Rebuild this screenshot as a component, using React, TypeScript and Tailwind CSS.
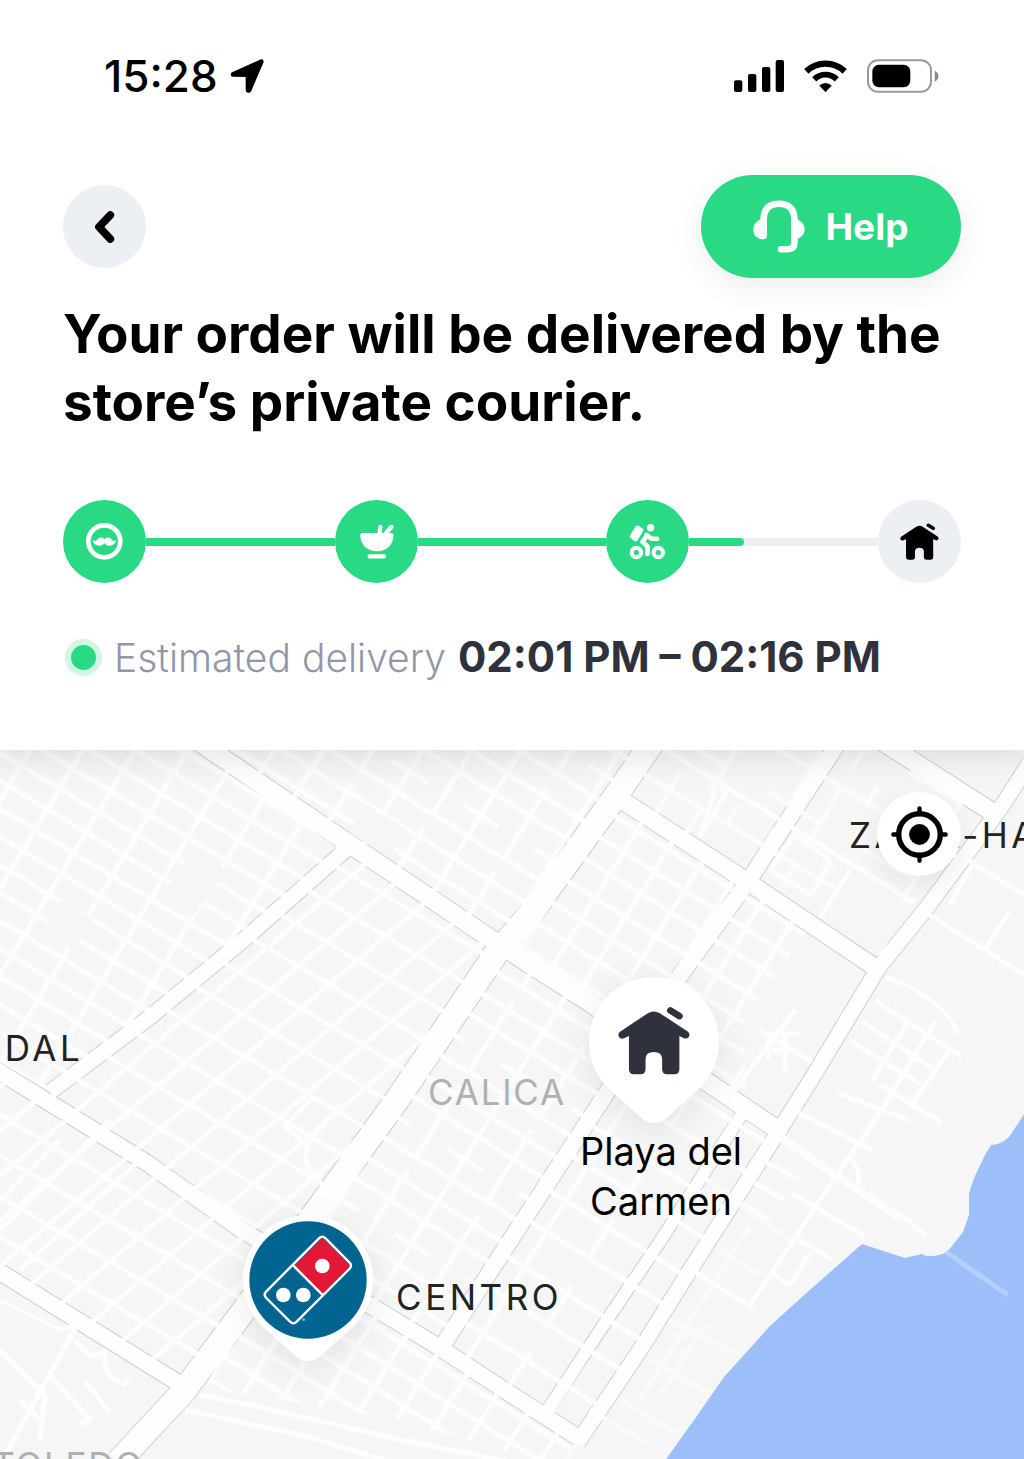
import type { ReactNode } from 'react'

const MAP_WIDTH = 1024
const MAP_TOP = 750
const MAP_HEIGHT = 709

type Road = { d: string; width: number }

const mainRoads: Road[] = [
  { d: 'M196 740 L348 843 L497 943 L595 1006 L775 1128', width: 18 },
  { d: 'M350 846 L247 937 L150 1017 L50 1092', width: 15 },
  { d: 'M654 740 L615 797 L528 917 L497 952 L397 1100 L315 1213 L242 1313 L183 1392 L118 1462', width: 24 },
  { d: 'M-5 1069 L45 1100 L147 1163 L243 1231 L373 1307 L437 1346 L512 1395 L579 1438', width: 16 },
  { d: 'M-5 1269 L180 1384', width: 16 },
  { d: 'M840 740 L749 880 L682 973 L602 1100 L515 1233 L443 1345', width: 16 },
  { d: 'M1030 762 L1002 806 L925 910 L879 967 L809 1083 L775 1137 L692 1267 L642 1347 L578 1442', width: 15 },
  { d: 'M742 1114 L659 1243 L609 1317 L546 1412', width: 12 },
  { d: 'M620 799 L745 880 L879 970', width: 17 },
  { d: 'M880 740 L992 812', width: 18 },
]

// Street blocks between the main roads, each filled with its own street pattern
const districts = [
  { points: '0,740 200,740 348,848 50,1092 0,1062', fill: 'url(#streets-a)' },
  { points: '205,740 654,740 522,935 497,943', fill: 'url(#streets-b)' },
  { points: '348,848 497,947 315,1213 243,1232 50,1095', fill: 'url(#streets-c)' },
  { points: '619,797 749,883 682,973 654,1045 595,1007 505,945', fill: 'url(#streets-d)' },
  { points: '654,740 840,740 749,883 622,800', fill: 'url(#streets-e)' },
  { points: '840,740 890,740 995,815 975,850 930,905 749,883', fill: 'url(#streets-e)' },
  { points: '749,883 812,925 745,1020 745,1107 650,1040 682,973', fill: 'url(#streets-d)' },
  { points: '505,947 600,1010 602,1100 443,1343 330,1290 315,1213', fill: 'url(#streets-b)' },
  { points: '0,1072 243,1232 242,1313 180,1387 0,1272', fill: 'url(#streets-c)' },
  { points: '245,1310 373,1307 579,1440 565,1470 400,1420 205,1388', fill: 'url(#streets-d)' },
  { points: '602,1100 650,1040 742,1114 546,1412 443,1345', fill: 'url(#streets-f)' },
  { points: '742,1114 775,1137 578,1442 546,1412', fill: 'url(#streets-f)' },
]

const sideStreets = [
  'M782 1136 L832 1173 M882 1110 L835 1177 L772 1273 L747 1308',
  'M799 1113 L872 1150 M838 1093 L910 1121 M880 1085 L942 1123 M882 1110 L912 1060 L936 1020',
  'M762 1160 L799 1180 M755 1183 L784 1200 M742 1203 L769 1220 M792 1193 L865 1237',
  'M692 1270 L755 1310 M795 1237 L832 1260 M810 1253 L790 1285 L772 1273',
  'M852 1160 Q862 1172 858 1184 M897 1212 L926 1235',
  'M875 1000 L962 1057 M862 1022 L932 1068 M849 1040 L920 1084 M908 1022 L872 1080 M949 1050 L912 1104',
  'M886 977 Q945 998 958 1035',
  'M925 912 L985 950 L1024 975 M985 950 L1010 910 M950 905 L975 860 M968 860 L1024 895',
  'M768 1034 H800 M772 1050 H798 M785 1036 V1070 M768 1040 V1060 M760 1030 L812 1062 M795 1010 L735 1090',
  'M650 740 L780 820 L915 903 M715 790 L700 835 L725 795 Q726 787 720 792',
  'M770 870 L795 835 L830 860 L812 895 L770 870 M850 870 L820 918',
  'M310 1100 L285 1127 L308 1145 Q300 1170 322 1178 M308 1145 L330 1115 L340 1105',
  'M0 1200 L60 1140 M0 1230 L110 1120 M20 1270 L140 1160',
  'M200 1395 L260 1407 L400 1440 L512 1462 M185 1410 L300 1435 L420 1470',
  'M0 1300 L60 1330 L75 1325 M80 1320 L5 1455 M50 1375 L90 1420 L80 1425 M20 1400 L45 1425 M85 1382 L110 1412',
  'M75 1340 Q90 1362 105 1352 Q100 1375 125 1385 L128 1378 M0 1350 L45 1395 L40 1440',
]

const faintStreets = [
  'M768 1150 L560 1470 M720 1250 L760 1275 M670 1320 L740 1355 M650 1360 L708 1392 M620 1400 L675 1432',
  'M750 1225 L640 1400 M705 1325 L660 1395 M700 1175 L790 1240 M590 1410 L650 1445',
]

const mapLabels = [
  { text: 'DAL', x: 44, y: 1048, className: 'text-[#222] tracking-widest' },
  { text: 'ZAZIL-HA', x: 944, y: 835, className: 'text-[#222] tracking-widest' },
  { text: 'CALICA', x: 497, y: 1092, className: 'text-[#b0b0b0] tracking-wider' },
  { text: 'CENTRO', x: 479, y: 1297, className: 'text-[#222] tracking-widest' },
  { text: 'TOLEDO', x: 68, y: 1465, className: 'text-[#b0b0b0] tracking-wider' },
]

// Position on the map canvas as a share of its size
const place = (x: number, y: number) => ({
  left: `${(x / MAP_WIDTH) * 100}%`,
  top: `${((y - MAP_TOP) / MAP_HEIGHT) * 100}%`,
})

const HouseIcon = ({ className }: { className: string }) => (
  <svg viewBox="0 0 217 207" className={className} fill="currentColor" aria-hidden="true">
    <path d="M90 21 Q108 11 126 21 L210 76 Q219 84 213 93 Q207 101 196 95 L185 90 V190 Q185 205 170 205 H148 Q133 205 133 190 V160 Q133 138 108 138 Q83 138 83 160 V190 Q83 205 68 205 H48 Q33 205 33 190 V90 L20 96 Q9 101 3 93 Q-2 84 6 77 Z" />
    <path d="M158 13 L185 30" stroke="currentColor" strokeWidth="20" strokeLinecap="round" />
  </svg>
)

const MustacheIcon = () => (
  <svg viewBox="0 0 111 111" className="size-[37px]" aria-hidden="true">
    <circle cx="55" cy="55" r="48" fill="none" stroke="currentColor" strokeWidth="14" />
    <path
      fill="currentColor"
      d="M55 49 C50 42 38 42 33 50 C29 55 24 55 20 51 C21 63 32 69 43 68 C50 67 54 63 55 60 C56 63 60 67 67 68 C78 69 89 63 91 51 C86 55 82 55 78 50 C72 42 60 42 55 49 Z"
    />
  </svg>
)

const BowlIcon = () => (
  <svg viewBox="0 0 105 105" className="size-[35px]" aria-hidden="true">
    <path d="M9 27 H97 Q103 27 103 34 C103 64 82 82 54 82 C26 82 4 64 4 34 Q4 27 9 27 Z" fill="currentColor" />
    <path d="M61 30 L64 9 M77 32 L97 9 M32 97 H75" fill="none" stroke="currentColor" strokeWidth="13" strokeLinecap="round" />
  </svg>
)

const CourierIcon = () => (
  <svg viewBox="0 0 110 110" className="size-[37px]" fill="none" stroke="currentColor" strokeLinecap="round" strokeLinejoin="round" aria-hidden="true">
    <circle cx="22" cy="88" r="14" strokeWidth="12" />
    <circle cx="87" cy="88" r="14" strokeWidth="12" />
    <circle cx="64" cy="14" r="11" fill="currentColor" stroke="none" />
    <path d="M25 14 L36 21 L20 48 L9 40 Z" fill="currentColor" strokeWidth="13" />
    <path d="M54 37 L40 56 L55 70 V92" strokeWidth="14" />
    <path d="M51 35 L67 47 H84" strokeWidth="13" />
  </svg>
)

const HeadsetIcon = () => (
  <svg viewBox="0 0 158 160" className="h-[53px] w-[52px]" aria-hidden="true">
    <path
      d="M32 105 V58 Q34 11 79 11 Q124 11 126 58 V128 Q126 149 105 149 H85"
      fill="none"
      stroke="currentColor"
      strokeWidth="20"
      strokeLinecap="round"
    />
    <path
      d="M32 56 C12 60 1 74 1 88 C1 107 13 119 33 119 Q42 119 42 110 V56 Z M125 56 C146 60 157 74 157 88 C157 103 147 114 130 118 L116 119 V56 Z"
      fill="currentColor"
    />
  </svg>
)

const StatusBar = () => (
  <div className="flex h-16 items-center justify-between pr-[22px] pl-[41px]">
    <div className="flex items-center gap-3">
      <span className="text-[44px] leading-none font-medium text-black">15:28</span>
      <svg viewBox="0 0 102 102" className="size-[34px]" aria-hidden="true">
        <path d="M9 46 L94 8 L57 94 H54 V47 Z" stroke="black" strokeWidth="14" strokeLinejoin="round" />
      </svg>
    </div>
    <div className="flex items-center gap-5">
      <svg viewBox="0 0 150 96" className="h-8 w-[50px]" aria-hidden="true">
        <rect x="0" y="61" width="25" height="35" rx="6" />
        <rect x="42" y="42" width="25" height="54" rx="6" />
        <rect x="84" y="21" width="25" height="75" rx="6" />
        <rect x="125" y="0" width="25" height="96" rx="6" />
      </svg>
      <svg viewBox="0 0 130 96" className="h-8 w-[43px]" aria-hidden="true">
        <path d="M7 34 A84 84 0 0 1 123 34" fill="none" stroke="black" strokeWidth="19" />
        <path d="M31 58 A48 48 0 0 1 99 58" fill="none" stroke="black" strokeWidth="18" />
        <path d="M46 77 Q65 61 84 77 L65 97 Z" />
      </svg>
      <svg viewBox="0 0 216 101" className="h-[34px] w-[72px]" aria-hidden="true">
        <rect x="3" y="3" width="189" height="95" rx="30" fill="none" stroke="#999" strokeWidth="6" />
        <rect x="16" y="17" width="114" height="67" rx="20" />
        <path d="M203 35 Q214 40 214 51 Q214 62 203 67 Z" fill="#888" />
      </svg>
    </div>
  </div>
)

type StepProps = { label: string; done?: boolean; children: ReactNode }

const Step = ({ label, done, children }: StepProps) => (
  <div
    role="img"
    aria-label={label}
    className={`flex size-[83px] shrink-0 items-center justify-center rounded-full ${
      done ? 'bg-[#2ad984] text-white' : 'bg-[#eceff4] text-black'
    }`}
  >
    {children}
  </div>
)

const Connector = ({ percent }: { percent: number }) => (
  <div className="h-2 flex-1 bg-[#eceff4]">
    <div
      className={`h-full bg-[#2ad984] ${percent < 100 ? 'rounded-r-full' : ''}`}
      style={{ width: `${percent}%` }}
    />
  </div>
)

const CityMap = () => (
  <svg viewBox={`0 ${MAP_TOP} ${MAP_WIDTH} ${MAP_HEIGHT}`} className="block h-auto w-full bg-[#f6f6f6]" aria-hidden="true">
    <defs>
      <pattern id="streets-a" width="90" height="96" patternUnits="userSpaceOnUse" patternTransform="translate(7 750) rotate(31)">
        <path d="M0 6 H90 M0 30 H90 M0 54 H90 M0 78 H90 M20 0 V96 M65 0 V96" fill="none" stroke="#fdfdfd" strokeWidth="5" />
      </pattern>
      <pattern id="streets-b" width="84" height="100" patternUnits="userSpaceOnUse" patternTransform="translate(300 750) rotate(32)">
        <path d="M0 10 H84 M0 34 H84 M0 60 H42 M0 84 H84 M20 0 V100 M62 0 V84" fill="none" stroke="#fdfdfd" strokeWidth="5" />
      </pattern>
      <pattern id="streets-c" width="72" height="74" patternUnits="userSpaceOnUse" patternTransform="matrix(0.86 0.51 -0.76 0.65 348 860)">
        <path d="M0 12 H72 M0 49 H72 M15 0 V74 M51 0 V74" fill="none" stroke="#fdfdfd" strokeWidth="5" />
      </pattern>
      <pattern id="streets-d" width="72" height="80" patternUnits="userSpaceOnUse" patternTransform="translate(628 815) rotate(32)">
        <path d="M0 8 H72 M0 34 H72 M0 60 H72 M16 0 V80 M52 0 V80" fill="none" stroke="#fdfdfd" strokeWidth="5" />
      </pattern>
      <pattern id="streets-e" width="110" height="90" patternUnits="userSpaceOnUse" patternTransform="translate(660 760) rotate(31)">
        <path d="M0 20 H110 M0 62 H60 M24 0 V62 M60 20 V90 M90 0 V20" fill="none" stroke="#fcfcfc" strokeWidth="5" />
      </pattern>
      <pattern id="streets-f" width="100" height="78" patternUnits="userSpaceOnUse" patternTransform="translate(602 1120) rotate(32)">
        <path d="M0 10 H100 M0 46 H100 M12 0 V78 M62 0 V46" fill="none" stroke="#fdfdfd" strokeWidth="5" />
      </pattern>
    </defs>

    {/* Sea */}
    <path
      d="M1030 1100 L1023 1116 L1009 1137 Q1000 1145 991 1145 L985 1155 L974 1178 L969 1193 V1215 L963 1232 L948 1251 Q940 1257 926 1256 L922 1254 L905 1258 L862 1244 L803 1296 L770 1326 L724 1377 L694 1420 L664 1462 H1030 Z"
      fill="#9dbff9"
    />
    <path d="M946 1252 L1008 1295" stroke="#b5cffb" strokeWidth="5" />

    {/* Casings go under the small streets so that every junction stays open */}
    <g fill="none" strokeLinejoin="round">
      {mainRoads.map((road) => (
        <path key={road.d} d={road.d} stroke="#cfcfcf" strokeWidth={road.width + 2} />
      ))}
    </g>
    {districts.map((district) => (
      <polygon key={district.points} points={district.points} fill={district.fill} />
    ))}

    {/* Parks and plots without streets */}
    <g fill="#f6f6f6">
      <path d="M63 901 L93 920 L73 950 L43 931 Z" />
      <path d="M193 850 L226 870 L193 916 L164 897 Z" />
      <path d="M364 804 L408 830 L388 856 L350 833 Z" />
      <path d="M852 873 L908 906 L880 957 L824 920 Z" />
    </g>

    <g fill="none" stroke="#fdfdfd" strokeWidth="5" strokeLinejoin="round">
      {sideStreets.map((d) => (
        <path key={d} d={d} />
      ))}
    </g>
    <path d="M782 1138 L832 1173 L899 1217" fill="none" stroke="#fdfdfd" strokeWidth="8" />
    <g fill="none" stroke="#fafafa" strokeWidth="5">
      {faintStreets.map((d) => (
        <path key={d} d={d} />
      ))}
    </g>
    <g fill="none" stroke="#fefefe" strokeLinejoin="round">
      {mainRoads.map((road) => (
        <path key={road.d} d={road.d} strokeWidth={road.width} />
      ))}
    </g>
  </svg>
)

const pinShape =
  'M195 0 A195 195 0 0 1 334 332 L230 425 Q195 450 160 425 L56 332 A195 195 0 0 1 195 0 Z'

const StorePin = () => (
  <svg viewBox="0 0 390 438" className="h-[146px] w-[130px] overflow-visible drop-shadow-[0_8px_16px_rgba(0,0,0,0.08)]" role="img" aria-label="Store">
    <path d={pinShape} fill="#fff" />
    <circle cx="195" cy="195" r="176" fill="#006491" />
    <path d="M238 68 L321 152 L239 240 L153 154 Z" fill="#e31837" />
    <path
      d="M228 70 Q238 60 248 70 L319 142 Q329 152 319 162 L161 320 Q151 330 141 320 L70 249 Q60 239 70 229 Z M151 152 L240 241"
      fill="none"
      stroke="#fff"
      strokeWidth="7"
    />
    <circle cx="238" cy="153" r="22" fill="#fff" />
    <circle cx="121" cy="240" r="22" fill="#fff" />
    <circle cx="181" cy="240" r="22" fill="#fff" />
    <circle cx="182" cy="314" r="4" fill="#8fb8cf" />
  </svg>
)

const HomePin = () => (
  <div className="relative text-[#2f323d]">
    <svg viewBox="0 0 390 438" className="h-[146px] w-[130px] overflow-visible drop-shadow-[0_8px_16px_rgba(0,0,0,0.08)]" aria-hidden="true">
      <path d={pinShape} fill="#fff" />
    </svg>
    <div className="absolute inset-x-0 top-0 flex h-[126px] items-center justify-center">
      <HouseIcon className="h-[69px] w-[72px]" />
    </div>
  </div>
)

export default function App() {
  return (
    <div className="min-h-screen overflow-hidden bg-white font-['Inter',sans-serif]">
      <header className="relative z-10 bg-white px-[63px] pt-11 pb-[67px] shadow-[0_0_32px_8px_rgba(0,0,0,0.10)]">
        <StatusBar />

        <div className="mt-[67px] flex items-center justify-between">
          <button type="button" aria-label="Back" className="flex size-[83px] items-center justify-center rounded-full bg-[#eceff4]">
            <svg viewBox="0 0 60 96" className="h-8 w-5" aria-hidden="true">
              <path d="M46 12 L12 48 L46 84" fill="none" stroke="black" strokeWidth="23" strokeLinecap="round" strokeLinejoin="round" />
            </svg>
          </button>
          <button
            type="button"
            className="flex h-[103px] w-[260px] items-center justify-center gap-5 rounded-full bg-[#2ad984] text-[37px] font-bold text-white shadow-[0_8px_32px_rgba(0,0,0,0.08)]"
          >
            <HeadsetIcon />
            Help
          </button>
        </div>

        <h1 className="mt-[22px] text-[53px] leading-[68px] font-bold text-black">
          Your order will be delivered by the store’s private courier.
        </h1>

        <div className="mt-16 flex items-center">
          <Step label="Order accepted" done>
            <MustacheIcon />
          </Step>
          <Connector percent={100} />
          <Step label="Being prepared" done>
            <BowlIcon />
          </Step>
          <Connector percent={100} />
          <Step label="On the way" done>
            <CourierIcon />
          </Step>
          <Connector percent={29} />
          <Step label="Delivered">
            <HouseIcon className="h-[37px] w-[39px]" />
          </Step>
        </div>

        <div className="mt-12 flex items-center whitespace-nowrap">
          <span className="ml-[2px] flex size-[37px] shrink-0 items-center justify-center rounded-full bg-[#d1f6e2]">
            <span className="size-[25px] rounded-full bg-[#2ad984]" />
          </span>
          <p className="ml-3 flex h-[52px] items-baseline gap-3 leading-[52px]">
            <span className="text-[39px] font-light text-[#9297a8]">Estimated delivery</span>
            <span className="text-[42px] font-bold text-[#2f323d]">02:01 PM – 02:16 PM</span>
          </p>
        </div>
      </header>

      <main className="relative overflow-hidden">
        <CityMap />

        {mapLabels.map((label) => (
          <span
            key={label.text}
            style={place(label.x, label.y)}
            className={`absolute -translate-x-1/2 -translate-y-1/2 text-[35px] leading-10 whitespace-nowrap ${label.className}`}
          >
            {label.text}
          </span>
        ))}

        <div style={place(654, 1050)} className="absolute -translate-x-1/2 -translate-y-1/2">
          <HomePin />
        </div>
        <p
          style={place(661, 1176)}
          className="absolute -translate-x-1/2 -translate-y-1/2 text-center text-[38px] leading-[50px] whitespace-nowrap text-black"
        >
          Playa del
          <br />
          Carmen
        </p>
        <div style={place(308, 1288)} className="absolute -translate-x-1/2 -translate-y-1/2">
          <StorePin />
        </div>

        <button
          type="button"
          aria-label="Show my location"
          style={place(919, 834)}
          className="absolute flex size-[84px] -translate-x-1/2 -translate-y-1/2 items-center justify-center rounded-full bg-white shadow-[0_8px_24px_rgba(0,0,0,0.08)]"
        >
          <svg viewBox="0 0 170 170" className="size-[57px]" fill="none" stroke="black" aria-hidden="true">
            <circle cx="85" cy="85" r="62" strokeWidth="16" />
            <circle cx="85" cy="85" r="31" fill="black" stroke="none" />
            <path d="M85 7 V24 M85 146 V163 M7 85 H24 M146 85 H163" strokeWidth="13" strokeLinecap="round" />
          </svg>
        </button>
      </main>
    </div>
  )
}
